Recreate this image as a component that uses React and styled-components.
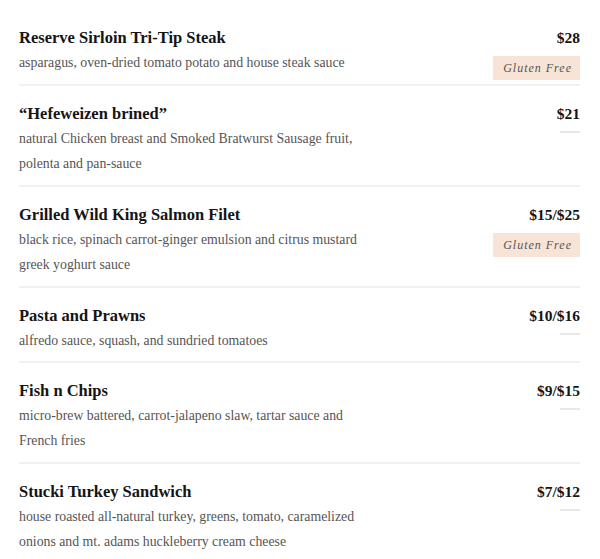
import React from 'react'
import styled, { createGlobalStyle } from 'styled-components'

const items = [
    {
        name: 'Reserve Sirloin Tri-Tip Steak',
        desc: ['asparagus, oven-dried tomato potato and house steak sauce'],
        price: '$28',
        glutenFree: true,
    },
    {
        name: '“Hefeweizen brined”',
        desc: ['natural Chicken breast and Smoked Bratwurst Sausage fruit,', 'polenta and pan-sauce'],
        price: '$21',
    },
    {
        name: 'Grilled Wild King Salmon Filet',
        desc: ['black rice, spinach carrot-ginger emulsion and citrus mustard', 'greek yoghurt sauce'],
        price: '$15/$25',
        glutenFree: true,
    },
    {
        name: 'Pasta and Prawns',
        desc: ['alfredo sauce, squash, and sundried tomatoes'],
        price: '$10/$16',
    },
    {
        name: 'Fish n Chips',
        desc: ['micro-brew battered, carrot-jalapeno slaw, tartar sauce and', 'French fries'],
        price: '$9/$15',
    },
    {
        name: 'Stucki Turkey Sandwich',
        desc: ['house roasted all-natural turkey, greens, tomato, caramelized', 'onions and mt. adams huckleberry cream cheese'],
        price: '$7/$12',
    },
]

function App() {
    return (
        <>
            <GlobalStyle />
            <Menu>
                {items.map((item) => (
                    <Item key={item.name}>
                        <Info>
                            <Name>{item.name}</Name>
                            {item.desc.map((line) => (
                                <Desc key={line}>{line}</Desc>
                            ))}
                        </Info>
                        <Side>
                            <Price>{item.price}</Price>
                            {item.glutenFree ? <Badge>Gluten Free</Badge> : <Tick />}
                        </Side>
                    </Item>
                ))}
            </Menu>
        </>
    )
}

export default App

const GlobalStyle = createGlobalStyle`
    body {
        margin: 0;
        background: #fff;
        font-family: "Liberation Serif", "DejaVu Serif", serif;
    }
`

const Menu = styled.div`
    padding: 10px 20px 0 19px;
    width: 600px;
    box-sizing: border-box;
`

const Item = styled.div`
    display: flex;
    justify-content: space-between;
    align-items: flex-start;
    padding: 15px 0 8.5px;
    border-bottom: 2px solid #f1f1f1;

    &:last-child {
        border-bottom: none;
    }
`

const Info = styled.div`
    display: flex;
    flex-direction: column;
`

const Name = styled.div`
    font-size: 16.5px;
    font-weight: bold;
    color: #151515;
    line-height: 25px;
`

const Desc = styled.div`
    font-size: 13.8px;
    color: #555;
    line-height: 25.2px;
`

const Side = styled.div`
    display: flex;
    flex-direction: column;
    align-items: flex-end;
`

const Price = styled.div`
    font-size: 15.5px;
    font-weight: bold;
    color: #151515;
    line-height: 25px;
`

const Badge = styled.div`
    margin: 6px 0 -6px;
    background: #f8e4d6;
    color: #555;
    font-style: italic;
    font-size: 12px;
    letter-spacing: 1px;
    padding: 0 8px 0 10px;
    height: 24px;
    line-height: 24px;
`

const Tick = styled.div`
    margin-top: 5px;
    width: 20px;
    height: 2px;
    background: #e8e8e8;
`
